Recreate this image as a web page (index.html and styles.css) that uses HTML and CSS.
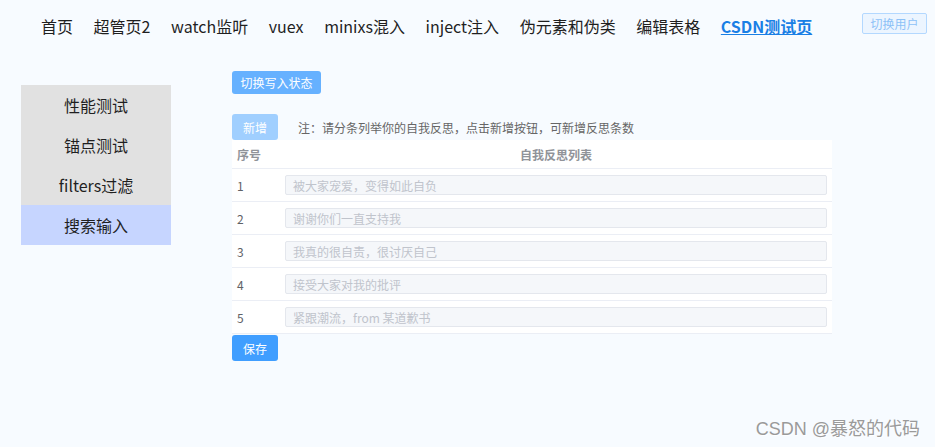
FILE: index.html
```html
<!DOCTYPE html>
<html lang="zh-CN">
<head>
    <meta charset="UTF-8">
    <meta name="viewport" content="width=device-width, initial-scale=1.0">
    <title>CSDN测试页</title>
    <link rel="stylesheet" href="styles.css">
</head>
<body>
    <!-- 顶部导航 -->
    <div class="header">
        <div class="nav">
            <a class="nav-item">首页</a>
            <a class="nav-item">超管页2</a>
            <a class="nav-item">watch监听</a>
            <a class="nav-item">vuex</a>
            <a class="nav-item">minixs混入</a>
            <a class="nav-item">inject注入</a>
            <a class="nav-item">伪元素和伪类</a>
            <a class="nav-item">编辑表格</a>
            <a class="nav-item active">CSDN测试页</a>
        </div>
        <button class="switch-user">切换用户</button>
    </div>

    <div class="page">
        <!-- 侧边菜单 -->
        <div class="side-menu">
            <div class="menu-item">性能测试</div>
            <div class="menu-item">锚点测试</div>
            <div class="menu-item">filters过滤</div>
            <div class="menu-item active">搜索输入</div>
        </div>

        <div class="main">
            <button class="btn btn-light">切换写入状态</button>

            <div class="toolbar">
                <button class="btn btn-add" disabled>新增</button>
                <span class="tip">注：请分条列举你的自我反思，点击新增按钮，可新增反思条数</span>
            </div>

            <table class="reflect-table">
                <thead>
                    <tr>
                        <th class="col-index">序号</th>
                        <th class="col-text">自我反思列表</th>
                    </tr>
                </thead>
                <tbody>
                    <tr>
                        <td class="col-index">1</td>
                        <td><input type="text" disabled placeholder="被大家宠爱，变得如此自负"></td>
                    </tr>
                    <tr>
                        <td class="col-index">2</td>
                        <td><input type="text" disabled placeholder="谢谢你们一直支持我"></td>
                    </tr>
                    <tr>
                        <td class="col-index">3</td>
                        <td><input type="text" disabled placeholder="我真的很自责，很讨厌自己"></td>
                    </tr>
                    <tr>
                        <td class="col-index">4</td>
                        <td><input type="text" disabled placeholder="接受大家对我的批评"></td>
                    </tr>
                    <tr>
                        <td class="col-index">5</td>
                        <td><input type="text" disabled placeholder="紧跟潮流，from 某道歉书"></td>
                    </tr>
                </tbody>
            </table>

            <button class="btn btn-save">保存</button>
        </div>
    </div>

    <div class="watermark">CSDN @暴怒的代码</div>
</body>
</html>
```

FILE: styles.css
```css
body {
    margin: 0;
    font-family: "Noto Sans CJK SC", "Noto Sans", sans-serif;
    background-color: #f7fbff;
    color: #222;
}
.header {
    display: flex;
    align-items: center;
    justify-content: space-between;
    height: 52px;
    padding: 0 8px 0 41px;
}
.nav {
    display: flex;
    gap: 20.6px;
}
.nav-item {
    font-size: 16px;
    color: #1f1f1f;
    cursor: pointer;
}
.nav-item.active {
    color: #1a7fe5;
    font-weight: bold;
    text-decoration: underline;
}
.switch-user {
    width: 65px;
    height: 21px;
    padding: 0;
    font-family: inherit;
    font-size: 12px;
    line-height: 19px;
    color: #8cc1f7;
    background-color: #ecf5ff;
    border: 1px solid #b3d8ff;
    border-radius: 2px;
    margin-top: -6px;
}
.page {
    display: flex;
    align-items: flex-start;
    padding-top: 19px;
}
.side-menu {
    width: 150px;
    margin: 14px 0 0 21px;
    background-color: #e1e1e1;
}
.menu-item {
    height: 40px;
    line-height: 40px;
    text-align: center;
    font-size: 16px;
    color: #1f1f1f;
}
.menu-item.active {
    background-color: #c6d5ff;
}
.main {
    margin-left: 61px;
    width: 600px;
}
.btn {
    display: block;
    padding: 0;
    font-family: inherit;
    font-size: 12px;
    color: #fff;
    border: none;
    border-radius: 3px;
    cursor: pointer;
}
.btn-light {
    width: 89px;
    height: 23px;
    background-color: #66b1ff;
}
.toolbar {
    display: flex;
    align-items: center;
    margin-top: 20px;
}
.btn-add {
    width: 46px;
    height: 26px;
    background-color: #a0cfff;
    cursor: not-allowed;
}
.tip {
    margin-left: 20px;
    font-size: 12px;
    color: #666;
}
.reflect-table {
    width: 600px;
    border-collapse: collapse;
    background-color: #fff;
    font-size: 12px;
}
.reflect-table th {
    height: 28px;
    padding: 0 5px;
    color: #909399;
    font-weight: bold;
    border-bottom: 1px solid #ebeef5;
}
.reflect-table th.col-index {
    text-align: left;
}
.reflect-table td {
    height: 32px;
    padding: 0 5px;
    color: #606266;
    border-bottom: 1px solid #ebeef5;
}
.col-index {
    width: 38px;
}
.reflect-table input {
    display: block;
    box-sizing: border-box;
    width: 100%;
    height: 20px;
    padding: 0 7px;
    font-family: inherit;
    font-size: 12px;
    background-color: #f5f7fa;
    border: 1px solid #e4e7ed;
    border-radius: 2px;
}
.reflect-table input::placeholder {
    color: #c0c4cc;
}
.btn-save {
    width: 46px;
    height: 26px;
    margin-top: 1px;
    background-color: #409eff;
}
.watermark {
    position: absolute;
    right: 15px;
    bottom: 7px;
    font-family: "Liberation Sans", "Noto Sans CJK SC", sans-serif;
    font-size: 18px;
    color: #9a9a9a;
    text-shadow: 1px 1px 1px #fff;
}
```
